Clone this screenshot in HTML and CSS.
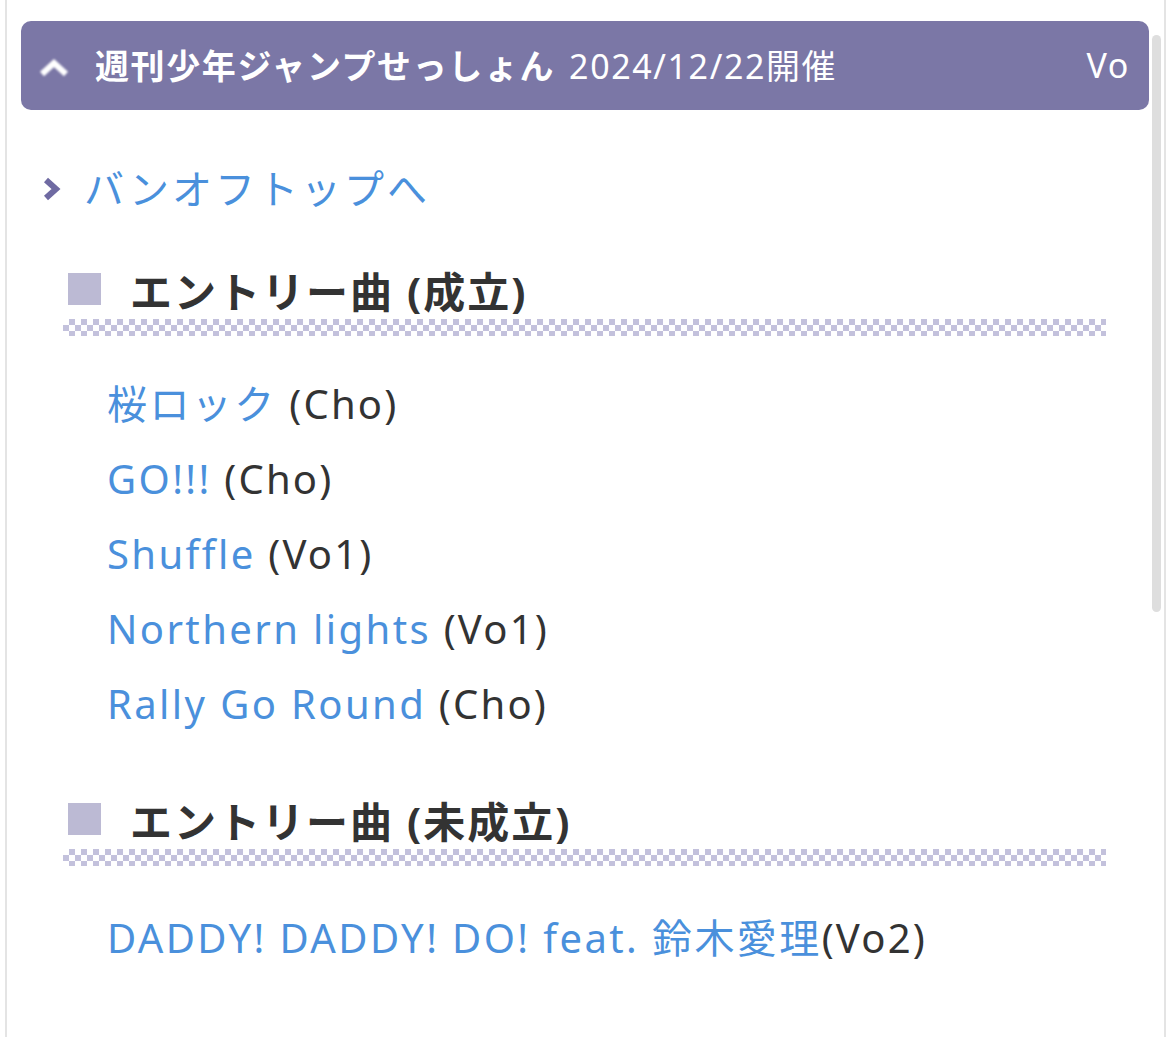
FILE: index.html
```html
<!DOCTYPE html>
<html lang="ja">
<head>
    <meta charset="UTF-8">
    <meta name="viewport" content="width=device-width, initial-scale=1.0">
    <title>週刊少年ジャンプせっしょん</title>
    <link rel="stylesheet" href="styles.css">
</head>
<body>
    <div class="wrap">
        <div class="scroll-thumb"></div>
        <div class="bar">
            <svg class="bar-icon" width="30" height="20" viewBox="0 0 30 20">
                <path d="M3 17 L15 6 L27 17" fill="none" stroke="#fff" stroke-width="6"/>
            </svg>
            <span class="bar-title">週刊少年ジャンプせっしょん</span>
            <span class="bar-date">2024/12/22開催</span>
            <span class="bar-part">Vo</span>
        </div>
        <a class="back" href="#">
            <svg class="back-icon" width="20" height="24" viewBox="0 0 20 24">
                <path d="M4 3 L14 12 L4 21" fill="none" stroke="#6f6aa2" stroke-width="6"/>
            </svg>
            <span>バンオフトップへ</span>
        </a>
        <div class="songs">
            <h2 class="songs-head"><span class="mark"></span>エントリー曲 (成立)</h2>
            <ul class="song-list">
                <li><a href="#">桜ロック</a> (Cho)</li>
                <li><a href="#">GO!!!</a> (Cho)</li>
                <li><a href="#">Shuffle</a> (Vo1)</li>
                <li><a href="#">Northern lights</a> (Vo1)</li>
                <li><a href="#">Rally Go Round</a> (Cho)</li>
            </ul>
            <h2 class="songs-head"><span class="mark"></span>エントリー曲 (未成立)</h2>
            <ul class="song-list song-list-pending">
                <li><a href="#">DADDY! DADDY! DO! feat. 鈴木愛理</a>(Vo2)</li>
            </ul>
        </div>
    </div>
</body>
</html>
```

FILE: styles.css
```css
*{
    margin: 0;
    padding: 0;
    list-style: none;
    box-sizing: border-box;
}
html,body{
    width: 100%;
    height: 100%;
    overflow: hidden;
    background-color: #fff;
}
body{
    font-family: "Noto Sans", "Noto Sans CJK JP", sans-serif;
    color: #333;
}
a{
    color: #4a90dc;
    text-decoration: none;
}
.wrap{
    position: relative;
    margin: 0 4px 0 5px;
    min-height: 100%;
    border-left: 2px solid #e4e4e4;
    border-right: 2px solid #e4e4e4;
    padding: 21px 15px 0 14px;
}
/* 右端のスクロールバー */
.scroll-thumb{
    position: absolute;
    top: 35px;
    right: 3px;
    width: 9px;
    height: 577px;
    border-radius: 5px;
    background-color: #dedede;
}
.bar{
    display: flex;
    align-items: center;
    height: 89px;
    padding: 0 19px 2px 18px;
    border-radius: 10px;
    background-color: #7b77a6;
    color: #fff;
    font-size: 34px;
    letter-spacing: 1.6px;
}
.bar-icon{
    flex: none;
    margin: 4px 26px 0 0;
    filter: blur(0.8px);
}
.bar-title{
    font-weight: bold;
    margin-right: 14px;
}
.bar-part{
    margin-left: auto;
}
.back{
    display: flex;
    align-items: center;
    margin-top: 48px;
    font-size: 40px;
    letter-spacing: 3px;
}
.back-icon{
    flex: none;
    margin: 4px 22px 0 21px;
    filter: blur(0.6px);
}
.songs{
    margin: 47px 43px 0 42px;
}
.songs-head{
    display: flex;
    align-items: center;
    height: 52px;
    padding-left: 5px;
    font-size: 42px;
    letter-spacing: 2px;
    font-weight: bold;
    color: #333;
}
.mark{
    width: 33px;
    height: 32px;
    margin-right: 29px;
    background-color: #bcbad4;
}
/* 市松模様の区切り線 */
.song-list{
    position: relative;
    margin-top: 4px;
    padding: 47px 0 0 44px;
}
.song-list::before{
    content: "";
    position: absolute;
    top: 0;
    left: 0;
    right: 0;
    height: 17px;
    background:
        conic-gradient(#c3c1dc 25%, #fff 0 50%, #c3c1dc 0 75%, #fff 0);
    background-size: 12px 12px;
}
.song-list-pending{
    padding-top: 51px;
}
.song-list li{
    height: 75px;
    line-height: 75px;
    font-size: 40px;
    letter-spacing: 2.2px;
}
.song-list li a{
    letter-spacing: 2.4px;
}
.song-list + .songs-head{
    margin-top: 52px;
}
```
